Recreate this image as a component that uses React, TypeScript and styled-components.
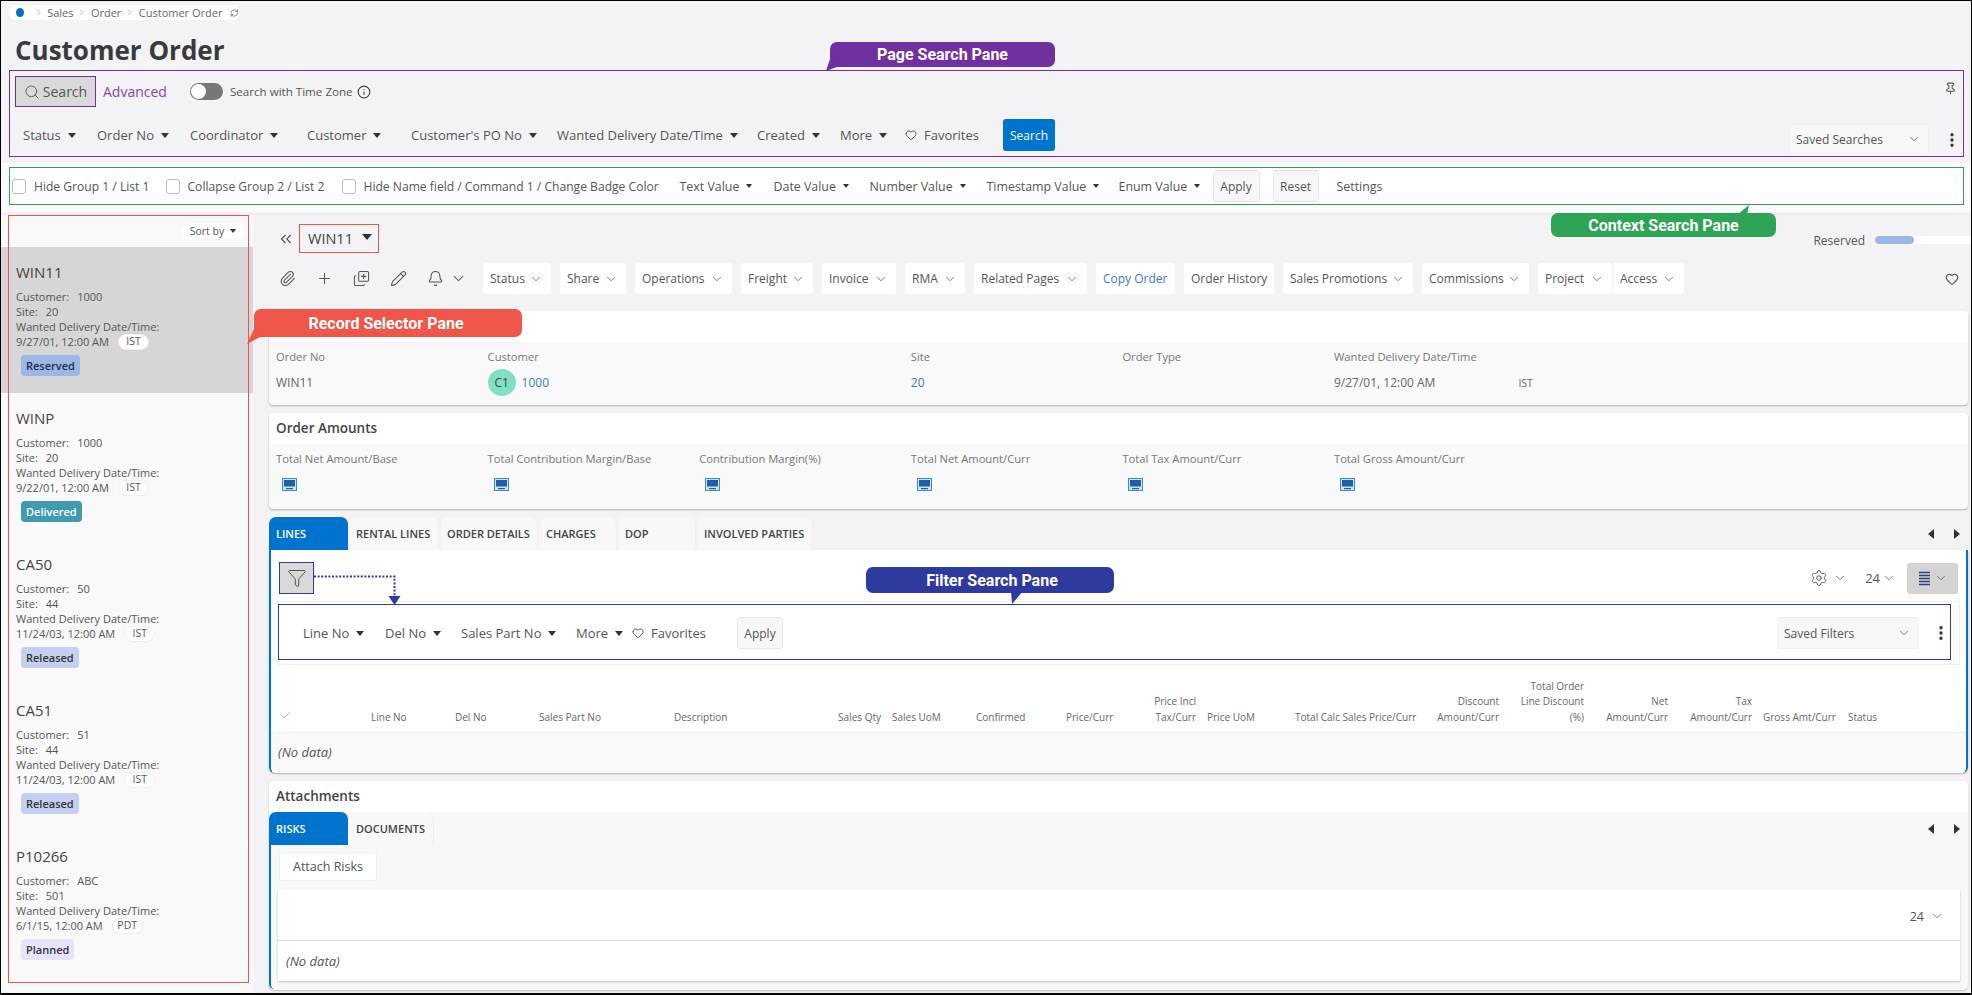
import React from "react";
import styled, { createGlobalStyle } from "styled-components";
import {
  Bell, Check, ChevronDown, ChevronRight, ChevronsLeft, CopyPlus, EllipsisVertical, Funnel, Heart,
  Info, Paperclip, Pencil, Pin, Plus, RefreshCw, Search as SearchIcon, Settings as GearIcon,
} from "lucide-react";

const Global = createGlobalStyle`
  html, body { margin: 0; padding: 0; background: #f3f2f5; }
  body { font-family: "Open Sans", "Liberation Sans", sans-serif; font-size: 13px; color: #555; }
  * { box-sizing: border-box; }
`;

const Frame = styled.div`
  position: relative; width: 1972px; height: 995px; overflow: hidden;
  border: 1px solid #000; border-bottom-width: 2px; background: #f3f2f5;
  display: flex; flex-direction: column;
`;
const TopZone = styled.header`height: 69px; flex: none;`;
const Breadcrumb = styled.nav`
  display: flex; align-items: center; margin: 4px 0 0 9px; width: 229px; height: 15px; padding-left: 6px;
  background: #fff; border-radius: 5px; font-size: 11px; color: #666; white-space: nowrap;
`;
const Dot = styled.span`width: 9px; height: 9px; border-radius: 50%; background: #0b6bcb; margin-right: 6px;`;
const CrumbSep = styled(ChevronRight)`width: 11px; height: 11px; margin: 0 4px; color: #777; stroke-width: 1.5;`;
const Refresh = styled(RefreshCw)`width: 10px; height: 10px; margin-left: 8px; color: #666;`;
const Title = styled.h1`
  margin: 14px 0 0 14px; font-size: 26px; line-height: 32px; font-weight: 700; color: #3a3a3c;
`;

const PagePane = styled.section`
  margin-left: 8px; width: 1955px; height: 87px; flex: none; border: 1px solid #7030a0; padding: 5px;
`;
const PaneRow = styled.div<{ $h: number; $top?: number }>`
  display: flex; align-items: center; height: ${p => p.$h}px; margin-top: ${p => p.$top ?? 0}px;
`;
const SearchTab = styled.button`
  display: flex; align-items: center; justify-content: center; gap: 3px; width: 81px; height: 31px; padding: 0;
  background: #d9d9d9; border: 1px solid #7030a0; font: inherit; font-size: 14px; color: #555;
  svg { width: 16px; height: 16px; stroke-width: 1.4; }
`;
const AdvancedLink = styled.span`margin-left: 7px; font-size: 14px; color: #84489f;`;
const Toggle = styled.span`
  position: relative; width: 33px; height: 17px; margin-left: 23px; border-radius: 9px; background: #777;
  &::after { content: ""; position: absolute; left: 1px; top: 1px; width: 15px; height: 15px; border-radius: 50%; background: #fff; }
`;
const ToggleLabel = styled.span`margin-left: 7px; font-size: 11.6px; color: #555;`;
const InfoMark = styled(Info)`width: 14px; height: 14px; margin-left: 4px; color: #444;`;
const PinMark = styled(Pin)`width: 13px; height: 13px; margin: -6px 1px 0 auto; color: #555;`;

const Caret = styled.span<{ $size?: number }>`
  display: inline-block; flex: none; width: 0; height: 0;
  border-left: ${p => p.$size ?? 4.5}px solid transparent; border-right: ${p => p.$size ?? 4.5}px solid transparent;
  border-top: ${p => (p.$size ?? 4.5) + 1}px solid #333;
`;
const DropItem = styled.span<{ $w: number; $size?: number }>`
  display: flex; align-items: center; gap: 7px; flex: none; width: ${p => p.$w}px; white-space: nowrap; color: #555;
  font-size: ${p => p.$size ?? 13}px;
`;
const HeartMark = styled(Heart)`width: 12px; height: 12px; color: #555; flex: none;`;
const PrimaryButton = styled.button`
  flex: none; width: 52px; height: 32px; padding: 0; border: 0; border-radius: 3px; background: #0073cf; color: #fff; font: inherit; font-size: 12px;
`;
const SavedSelect = styled.div<{ $w: number; $h: number; $top?: number }>`
  display: flex; align-items: center; justify-content: space-between; flex: none;
  width: ${p => p.$w}px; height: ${p => p.$h}px; margin: ${p => p.$top ?? 0}px 0 0 auto; padding: 0 7px 0 6px;
  background: #f7f7f7; border: 1px solid #eee; border-radius: 3px; font-size: 12px; color: #555;
`;
const SmallChevron = styled(ChevronDown)`width: 14px; height: 14px; color: #666; stroke-width: 1.5; flex: none;`;
const Kebab = styled(EllipsisVertical)<{ $top?: number; $out?: number }>`
  width: 18px; height: 18px; margin: ${p => p.$top ?? 0}px ${p => -(p.$out ?? 0)}px 0 auto; color: #333; stroke-width: 2.4; flex: none;
`;
const KebabSlot = styled.div<{ $w: number }>`display: flex; flex: none; width: ${p => p.$w}px; align-items: center;`;

const ContextBand = styled.div`flex: none; height: 49px; margin-top: 6px; padding: 4px 8px 7px; background: #fbfbfb;`;
const ContextPane = styled.section`
  display: flex; align-items: center; width: 1955px; height: 38px; padding-left: 2px; background: #fff; border: 1px solid #2e9e4f;
`;
const CheckItem = styled.label<{ $w: number }>`
  display: flex; align-items: center; gap: 8px; flex: none; width: ${p => p.$w}px; white-space: nowrap; color: #555; font-size: 12.1px;
`;
const CheckBox = styled.span`width: 14px; height: 15px; flex: none; background: #fff; border: 1px solid #bbb; border-radius: 3px;`;
const GhostButton = styled.button<{ $w: number; $after: number; $ml?: number }>`
  flex: none; width: ${p => p.$w}px; height: 32px; margin-left: ${p => p.$ml ?? 0}px; margin-right: ${p => p.$after}px; padding: 0;
  background: #f7f7f7; border: 1px solid #e6e6e6; border-radius: 3px; font: inherit; font-size: 12px; color: #555;
`;

const Body = styled.div`display: flex; flex: 1; min-height: 0; margin-top: 2px; border-top: 1px solid #ecebef;`;
const Aside = styled.aside`position: relative; flex: none; width: 252px; background: #f9f9f9;`;
const SortRow = styled.div`display: flex; height: 32px; padding: 8px 9px 0 0; justify-content: flex-end;`;
const SortPill = styled.div`
  display: flex; align-items: center; justify-content: center; gap: 6px; width: 62px; height: 16px;
  background: #fff; border-radius: 8px; font-size: 10.5px; color: #555;
`;
const SelectorItem = styled.article<{ $active?: boolean }>`
  height: 146px; padding: 14px 0 0 15px; background: ${p => (p.$active ? "#d6d6d6" : "transparent")};
`;
const ItemTitle = styled.div`font-size: 15px; line-height: 22px; color: #444;`;
const ItemLines = styled.div`margin-top: 6px; font-size: 11px; line-height: 15px; color: #555;`;
const ItemLine = styled.div`display: flex; gap: 8px; align-items: center; height: 15px; white-space: nowrap;`;
const ZonePill = styled.span`
  display: flex; align-items: center; justify-content: center; width: 31px; height: 16px; margin-left: 1px;
  background: #fff; border-radius: 8px; border: 1px solid #eee; font-size: 10.5px; color: #555;
`;
const Badge = styled.div<{ $bg: string; $fg: string }>`
  display: inline-block; height: 21px; margin: 6px 0 0 5px; padding: 0 5px; line-height: 21px; border-radius: 4px;
  font-size: 11px; font-weight: 600; background: ${p => p.$bg}; color: ${p => p.$fg};
`;
const RedOutline = styled.div`
  position: absolute; left: 7px; top: 0; width: 241px; height: 768px; border: 1px solid #ef5548; pointer-events: none;
`;

const Main = styled.main`flex: 1; min-width: 0; padding: 0 3px 0 16px; display: flex; flex-direction: column;`;
const HeaderRow = styled.div`display: flex; align-items: center; height: 48px; flex: none;`;
const Collapse = styled(ChevronsLeft)`width: 18px; height: 18px; margin-left: 8px; margin-right: 4px; color: #555; stroke-width: 1.5;`;
const RecordBox = styled.div`
  display: flex; align-items: center; justify-content: space-between; width: 80px; height: 29px; margin-top: -1px; padding: 0 6px 0 8px;
  border: 1px solid #ef5548; font-size: 14.5px; color: #444;
`;
const RecordCaret = styled(Caret)`margin-top: -4px;`;
const StatusBlock = styled.div`display: flex; align-items: center; gap: 10px; margin: 2px -3px 0 auto; font-size: 12px; color: #555;`;
const StatusTrack = styled.div`width: 96px; height: 8px; background: #fff; border-radius: 4px 0 0 4px; overflow: hidden;`;
const StatusFill = styled.div`width: 39px; height: 8px; background: #9ab7e6; border-radius: 4px;`;

const Toolbar = styled.div`display: flex; align-items: center; height: 31px; flex: none;`;
const ToolIcons = styled.div`display: flex; align-items: center; width: 214px; padding-left: 10px; gap: 20px; color: #555; flex: none;
  svg { width: 17px; height: 17px; stroke-width: 1.5; flex: none; }
`;
const BellGroup = styled.span`display: flex; align-items: center; gap: 6px;`;
const FlippedCopy = styled(CopyPlus)`transform: scaleY(-1);`;
const ToolButton = styled.button<{ $w: number; $after?: number; $link?: boolean }>`
  display: flex; align-items: center; justify-content: space-between; flex: none;
  width: ${p => p.$w}px; height: 31px; margin-right: ${p => p.$after ?? 9}px; padding: 0 8px 0 7px;
  background: #fff; border: 0; border-radius: 3px; font: inherit; font-size: 12px; white-space: nowrap;
  color: ${p => (p.$link ? "#3b78c4" : "#555")};
`;
const EndHeart = styled(Heart)`width: 14px; height: 14px; margin: 0 9px 0 auto; color: #555;`;

const Card = styled.section<{ $h: number; $top: number }>`
  flex: none; height: ${p => p.$h}px; margin-top: ${p => p.$top}px; background: #f9f9f9; border-radius: 4px;
  box-shadow: 0 1px 2px rgba(0, 0, 0, .28); overflow: hidden;
`;
const CardHead = styled.div`height: 31px; padding-left: 7px; background: #fff; font-size: 13.5px; font-weight: 600; line-height: 31px; color: #444;`;
const FieldGrid = styled.div`display: grid; grid-template-columns: repeat(6, 211.6px); padding: 7px 0 0 7px;`;
const Field = styled.div``;
const FieldLabel = styled.div`font-size: 11.2px; line-height: 16px; color: #777;`;
const FieldValue = styled.div`display: flex; align-items: center; gap: 6px; height: 27px; margin-top: 4px; font-size: 12px; color: #666;`;
const Avatar = styled.span`
  display: flex; align-items: center; justify-content: center; width: 28px; height: 27px; border-radius: 50%;
  background: #7fe0c3; color: #444; font-size: 12px;
`;
const ValueLink = styled.span`color: #3b78c4;`;
const ZoneText = styled.span`margin-left: 77px; font-size: 10.5px; color: #666;`;
const ScreenSlot = styled.div`padding: 10px 0 0 6px; height: 24px;`;

const TabBar = styled.div<{ $top?: number }>`
  display: flex; align-items: stretch; gap: 2px; height: 33px; flex: none; margin-top: ${p => p.$top ?? 0}px;
`;
const Tab = styled.div<{ $w: number; $active?: boolean }>`
  width: ${p => p.$w}px; padding-left: ${p => (p.$active ? 7 : 6)}px; line-height: 33px; border-radius: 7px 7px 0 0; font-size: 11px; font-weight: 600; white-space: nowrap;
  background: ${p => (p.$active ? "#0073cf" : "#f8f8f8")}; color: ${p => (p.$active ? "#fff" : "#444")};
  box-shadow: ${p => (p.$active ? "none" : "inset -1px 0 0 #eee")};
`;
const TabArrows = styled.div`display: flex; align-items: center; gap: 20px; margin-left: auto; padding-right: 8px;`;
const ArrowMark = styled.span<{ $dir: "l" | "r" }>`
  width: 0; height: 0; border-top: 5px solid transparent; border-bottom: 5px solid transparent;
  ${p => (p.$dir === "l" ? "border-right: 6px solid #333;" : "border-left: 6px solid #333;")}
`;

const LinesPanel = styled.section`
  display: flex; flex-direction: column; flex: none; height: 223px; background: #fff; overflow: hidden;
  border-left: 2px solid #0073cf; border-right: 2px solid #0073cf; border-radius: 0 0 6px 6px; box-shadow: 0 1px 2px rgba(0, 0, 0, .28);
`;
const PanelTools = styled.div`display: flex; align-items: center; height: 32px; margin: 12px 8px 0; flex: none;`;
const FilterToggle = styled.button`
  display: flex; align-items: center; justify-content: center; width: 35px; height: 32px; padding: 0;
  background: #d9d9d9; border: 1px solid #2e3a9e; color: #555;
  svg { width: 20px; height: 20px; stroke-width: 1.2; }
`;
const ToolsRight = styled.div`display: flex; align-items: center; margin-left: auto; color: #555;`;
const GearMark = styled(GearIcon)`width: 18px; height: 18px; stroke-width: 1.3;`;
const PageSize = styled.span`margin: 0 2px 0 0; font-size: 13px;`;
const ToolsGap = styled.span<{ $w: number }>`width: ${p => p.$w}px; flex: none;`;
const ListButton = styled.div`
  display: flex; align-items: center; justify-content: center; gap: 3px; width: 51px; height: 31px;
  background: #d3d3d3; border-radius: 3px;
`;
const FilterOuter = styled.div`
  flex: none; height: 64px; margin: 7px 6px 0 7px; padding-top: 2px; border: 1px solid #eee;
`;
const FilterPane = styled.div`
  display: flex; align-items: center; height: 56px; margin: 0 8px 0 -1px; padding: 2px 0 0 24px; border: 1px solid #2e3a9e;
`;
const GridHead = styled.div`
  display: grid; flex: none; height: 68px; align-items: end; padding-bottom: 7px; border-bottom: 1px solid #eee;
  grid-template-columns: 100px 84px 84px 135px 120px 98px 84px 90px 54px 87px 88px 131px 84px 85px 84px 84px 85px auto;
`;
const HeadCell = styled.div<{ $right?: boolean }>`
  font-size: 10px; line-height: 15.5px; color: #666; white-space: pre;
  text-align: ${p => (p.$right ? "right" : "left")}; padding-right: ${p => (p.$right ? 11 : 0)}px;
`;
const CheckCell = styled(Check)`width: 11px; height: 11px; margin-left: 9px; color: #999;`;
const NoData = styled.div`
  flex: 1; display: flex; align-items: center; padding: 0 0 2px 7px; background: #f9f9f9; font-style: italic; font-size: 13px; color: #555;
`;

const AttachmentsCard = styled.section`
  flex: none; height: 209px; margin-top: 8px; background: #f8f8f8; border-radius: 5px;
  box-shadow: 0 1px 2px rgba(0, 0, 0, .2); overflow: hidden;
`;
const AttachBody = styled.div`height: 144px; padding: 7px 8px 0 8px; border-left: 2px solid #0073cf; border-radius: 0 0 0 5px;`;
const AttachButton = styled.button`
  display: block; width: 98px; height: 29px; padding: 0; background: #fff; border: 1px solid #eee; border-radius: 3px; font: inherit; font-size: 12.5px; color: #555;
`;
const RiskTable = styled.div`margin: 9px 0 0 -1px; height: 91px; background: #fff; box-shadow: 0 1px 2px rgba(0, 0, 0, .22);`;
const RiskHead = styled.div`
  display: flex; align-items: center; justify-content: flex-end; gap: 6px; height: 51px; padding: 2px 16px 0 0; border-bottom: 1px solid #ddd; font-size: 12.5px; color: #555;
`;
const RiskEmpty = styled.div`display: flex; align-items: center; height: 40px; padding-left: 8px; font-style: italic; font-size: 13px; color: #555;`;

const Callout = styled.div<{ $x: number; $y: number; $w: number; $h: number; $bg: string; $nudge?: number }>`
  position: absolute; left: ${p => p.$x}px; top: ${p => p.$y}px; width: ${p => p.$w}px; height: ${p => p.$h}px;
  display: flex; align-items: center; justify-content: center; border-radius: 7px; background: ${p => p.$bg};
  padding-left: ${p => Math.max(p.$nudge ?? 0, 0)}px; padding-right: ${p => Math.max(-(p.$nudge ?? 0), 0)}px;
  color: #fff; font-family: Roboto, "Liberation Sans", sans-serif; font-weight: 700; font-size: 16px; white-space: nowrap;
`;
const Tail = styled.svg<{ $x: number; $y: number }>`position: absolute; left: ${p => p.$x}px; top: ${p => p.$y}px;`;

const ScreenIcon = () => (
  <svg width="15" height="13" viewBox="0 0 15 13">
    <rect x="0.5" y="0.5" width="14" height="12" fill="#cfe3f7" stroke="#3b8ad8" />
    <rect x="2" y="2" width="11" height="6.5" fill="#1f5fa8" />
    <rect x="4" y="10" width="7" height="1.2" fill="#1f5fa8" />
  </svg>
);
const ListIcon = () => (
  <svg width="13" height="15" viewBox="0 0 13 15">
    <path d="M1 1.5H12M1 4.5H12M1 7.5H12M1 10.5H12M1 13.5H12" stroke="#2e3f7a" strokeWidth="1.4" />
  </svg>
);

const records = [
  { t: "WIN11", c: "1000", s: "20", d: "9/27/01, 12:00 AM", z: "IST", b: "Reserved", bg: "#9ab7e6", fg: "#1d2f4f", on: true },
  { t: "WINP", c: "1000", s: "20", d: "9/22/01, 12:00 AM", z: "IST", b: "Delivered", bg: "#3f9bad", fg: "#fff" },
  { t: "CA50", c: "50", s: "44", d: "11/24/03, 12:00 AM", z: "IST", b: "Released", bg: "#c5d0f0", fg: "#333" },
  { t: "CA51", c: "51", s: "44", d: "11/24/03, 12:00 AM", z: "IST", b: "Released", bg: "#c5d0f0", fg: "#333" },
  { t: "P10266", c: "ABC", s: "501", d: "6/1/15, 12:00 AM", z: "PDT", b: "Planned", bg: "#e7e4fa", fg: "#333" },
];
const pageFilters: [string, number][] = [["Status", 74], ["Order No", 93], ["Coordinator", 117], ["Customer", 104], ["Customer's PO No", 146], ["Wanted Delivery Date/Time", 200], ["Created", 83], ["More", 65]];
const contextFilters: [string, number][] = [["Text Value", 94], ["Date Value", 96], ["Number Value", 117], ["Timestamp Value", 132], ["Enum Value", 94]];
const toolButtons: [string, number][] = [["Status", 68], ["Share", 66], ["Operations", 97], ["Freight", 72], ["Invoice", 74], ["RMA", 60], ["Related Pages", 113]];
const toolButtons2: [string, number][] = [["Sales Promotions", 130], ["Commissions", 107]];
const amounts = ["Total Net Amount/Base", "Total Contribution Margin/Base", "Contribution Margin(%)", "Total Net Amount/Curr", "Total Tax Amount/Curr", "Total Gross Amount/Curr"];
const lineTabs: [string, number][] = [["LINES", 79], ["RENTAL LINES", 89], ["ORDER DETAILS", 97], ["CHARGES", 77], ["DOP", 77], ["INVOLVED PARTIES", 115]];
const filterItems: [string, number][] = [["Line No", 82], ["Del No", 76], ["Sales Part No", 115], ["More", 56]];
const columns: [string, boolean?][] = [
  ["Line No"], ["Del No"], ["Sales Part No"], ["Description"], ["Sales Qty", true], ["Sales UoM"], ["Confirmed"], ["Price/Curr"],
  ["Price Incl\nTax/Curr", true], ["Price UoM"], ["Total Calc Sales Price/Curr", true], ["Discount\nAmount/Curr", true],
  ["Total Order\nLine Discount\n(%)", true], ["Net\nAmount/Curr", true], ["Tax\nAmount/Curr", true], ["Gross Amt/Curr"], ["Status"],
];

export default function App() {
  return (
    <Frame>
      <Global />
      <TopZone>
        <Breadcrumb>
          <Dot /><CrumbSep />Sales<CrumbSep />Order<CrumbSep />Customer Order<Refresh />
        </Breadcrumb>
        <Title>Customer Order</Title>
      </TopZone>

      <PagePane>
        <PaneRow $h={31}>
          <SearchTab><SearchIcon />Search</SearchTab>
          <AdvancedLink>Advanced</AdvancedLink>
          <Toggle />
          <ToggleLabel>Search with Time Zone</ToggleLabel>
          <InfoMark />
          <PinMark />
        </PaneRow>
        <PaneRow $h={32} $top={12}>
          <KebabSlot $w={8} />
          {pageFilters.map(([t, w]) => <DropItem key={t} $w={w}>{t}<Caret /></DropItem>)}
          <DropItem $w={98}><HeartMark />Favorites</DropItem>
          <PrimaryButton>Search</PrimaryButton>
          <SavedSelect $w={140} $h={30} $top={8}>Saved Searches<SmallChevron /></SavedSelect>
          <KebabSlot $w={29}><Kebab $top={10} $out={3} /></KebabSlot>
        </PaneRow>
      </PagePane>

      <ContextBand>
        <ContextPane>
          <CheckItem $w={153.5}><CheckBox />Hide Group 1 / List 1</CheckItem>
          <CheckItem $w={176}><CheckBox />Collapse Group 2 / List 2</CheckItem>
          <CheckItem $w={338}><CheckBox />Hide Name field / Command 1 / Change Badge Color</CheckItem>
          {contextFilters.map(([t, w]) => <DropItem key={t} $w={w} $size={12.4}>{t}<Caret $size={3.5} /></DropItem>)}
          <GhostButton $w={47} $after={13}>Apply</GhostButton>
          <GhostButton $w={46} $after={18}>Reset</GhostButton>
          <DropItem $w={70} $size={12.4}>Settings</DropItem>
        </ContextPane>
      </ContextBand>

      <Body>
        <Aside>
          <SortRow><SortPill>Sort by <Caret $size={3} /></SortPill></SortRow>
          {records.map(r => (
            <SelectorItem key={r.t} $active={r.on}>
              <ItemTitle>{r.t}</ItemTitle>
              <ItemLines>
                <ItemLine>Customer:<span>{r.c}</span></ItemLine>
                <ItemLine>Site:<span>{r.s}</span></ItemLine>
                <ItemLine>Wanted Delivery Date/Time:</ItemLine>
                <ItemLine>{r.d}<ZonePill>{r.z}</ZonePill></ItemLine>
              </ItemLines>
              <Badge $bg={r.bg} $fg={r.fg}>{r.b}</Badge>
            </SelectorItem>
          ))}
          <RedOutline />
        </Aside>

        <Main>
          <HeaderRow>
            <Collapse />
            <RecordBox>WIN11<RecordCaret $size={5.5} /></RecordBox>
            <StatusBlock>Reserved<StatusTrack><StatusFill /></StatusTrack></StatusBlock>
          </HeaderRow>

          <Toolbar>
            <ToolIcons>
              <Paperclip /><Plus /><FlippedCopy /><Pencil />
              <BellGroup><Bell /><SmallChevron /></BellGroup>
            </ToolIcons>
            {toolButtons.map(([t, w]) => <ToolButton key={t} $w={w}>{t}<SmallChevron /></ToolButton>)}
            <ToolButton $w={79} $link>Copy Order</ToolButton>
            <ToolButton $w={90}>Order History</ToolButton>
            {toolButtons2.map(([t, w]) => <ToolButton key={t} $w={w}>{t}<SmallChevron /></ToolButton>)}
            <ToolButton $w={74} $after={1}>Project<SmallChevron /></ToolButton>
            <ToolButton $w={71} $after={0}>Access<SmallChevron /></ToolButton>
            <EndHeart />
          </Toolbar>

          <Card $h={94} $top={17}>
            <CardHead />
            <FieldGrid>
              <Field><FieldLabel>Order No</FieldLabel><FieldValue>WIN11</FieldValue></Field>
              <Field><FieldLabel>Customer</FieldLabel><FieldValue><Avatar>C1</Avatar><ValueLink>1000</ValueLink></FieldValue></Field>
              <Field />
              <Field><FieldLabel>Site</FieldLabel><FieldValue><ValueLink>20</ValueLink></FieldValue></Field>
              <Field><FieldLabel>Order Type</FieldLabel></Field>
              <Field>
                <FieldLabel>Wanted Delivery Date/Time</FieldLabel>
                <FieldValue>9/27/01, 12:00 AM<ZoneText>IST</ZoneText></FieldValue>
              </Field>
            </FieldGrid>
          </Card>

          <Card $h={96} $top={8}>
            <CardHead>Order Amounts</CardHead>
            <FieldGrid>
              {amounts.map(a => (
                <Field key={a}><FieldLabel>{a}</FieldLabel><ScreenSlot><ScreenIcon /></ScreenSlot></Field>
              ))}
            </FieldGrid>
          </Card>

          <TabBar $top={8}>
            {lineTabs.map(([t, w], i) => <Tab key={t} $w={w} $active={i === 0}>{t}</Tab>)}
            <TabArrows><ArrowMark $dir="l" /><ArrowMark $dir="r" /></TabArrows>
          </TabBar>

          <LinesPanel>
            <PanelTools>
              <FilterToggle><Funnel /></FilterToggle>
              <ToolsRight>
                <GearMark /><ToolsGap $w={5} /><SmallChevron /><ToolsGap $w={18} />
                <PageSize>24</PageSize><SmallChevron /><ToolsGap $w={11} />
                <ListButton><ListIcon /><SmallChevron /></ListButton>
              </ToolsRight>
            </PanelTools>
            <FilterOuter>
              <FilterPane>
                {filterItems.map(([t, w]) => <DropItem key={t} $w={w}>{t}<Caret /></DropItem>)}
                <DropItem $w={105}><HeartMark />Favorites</DropItem>
                <GhostButton $w={46} $after={0}>Apply</GhostButton>
                <SavedSelect $w={142} $h={32}>Saved Filters<SmallChevron /></SavedSelect>
                <KebabSlot $w={31}><Kebab /></KebabSlot>
              </FilterPane>
            </FilterOuter>
            <GridHead>
              <HeadCell><CheckCell /></HeadCell>
              {columns.map(([t, r]) => <HeadCell key={t} $right={r}>{t}</HeadCell>)}
            </GridHead>
            <NoData>(No data)</NoData>
          </LinesPanel>

          <AttachmentsCard>
            <CardHead>Attachments</CardHead>
            <TabBar>
              <Tab $w={79} $active>RISKS</Tab>
              <Tab $w={84}>DOCUMENTS</Tab>
              <TabArrows><ArrowMark $dir="l" /><ArrowMark $dir="r" /></TabArrows>
            </TabBar>
            <AttachBody>
              <AttachButton>Attach Risks</AttachButton>
              <RiskTable>
                <RiskHead>24<SmallChevron /></RiskHead>
                <RiskEmpty>(No data)</RiskEmpty>
              </RiskTable>
            </AttachBody>
          </AttachmentsCard>
        </Main>
      </Body>

      <Callout $x={829} $y={41} $w={225} $h={25} $bg="#7030a0">Page Search Pane</Callout>
      <Tail $x={823} $y={58} width="20" height="13"><path d="M6 0 L18 6 L2 12 Z" fill="#7030a0" /></Tail>
      <Callout $x={1550} $y={212} $w={225} $h={24} $bg="#2ea457">Context Search Pane</Callout>
      <Tail $x={1732} $y={204} width="20" height="10"><path d="M16 0 L14 10 L4 10 Z" fill="#2ea457" /></Tail>
      <Callout $x={253} $y={308} $w={268} $h={28} $bg="#ef5548" $nudge={-4}>Record Selector Pane</Callout>
      <Tail $x={245} $y={326} width="20" height="18"><path d="M9 0 L18 8 L1 17 Z" fill="#ef5548" /></Tail>
      <Callout $x={865} $y={566} $w={248} $h={26} $bg="#2e3a9e" $nudge={4}>Filter Search Pane</Callout>
      <Tail $x={1006} $y={590} width="20" height="14"><path d="M4 0 L16 0 L5 13 Z" fill="#2e3a9e" /></Tail>
      <Tail $x={312} $y={570} width="92" height="36">
        <path d="M1 5.5 H81.5 V26" fill="none" stroke="#2e3a9e" strokeWidth="2" strokeDasharray="2 1.6" />
        <path d="M75.5 25 H87.5 L81.5 34 Z" fill="#2e3a9e" />
      </Tail>
    </Frame>
  );
}
